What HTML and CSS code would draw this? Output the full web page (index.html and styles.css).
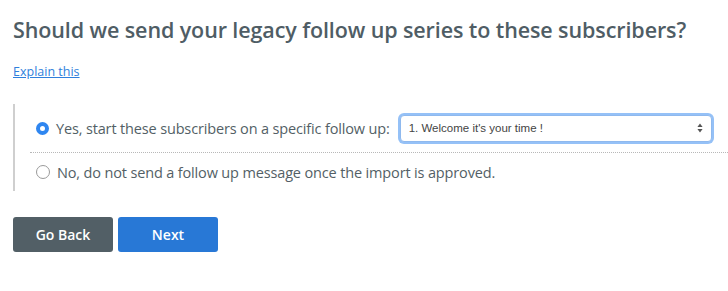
FILE: index.html
```html
<!DOCTYPE html>
<html>
<head>
<meta charset="utf-8">
<link rel="stylesheet" href="styles.css">
</head>
<body>
<div class="page">
  <h1 class="title">Should we send your legacy follow up series to these subscribers?</h1>
  <a class="explain" href="#">Explain this</a>
  <div class="options">
    <div class="option option-first">
      <span class="radio radio-on"></span>
      <span class="label">Yes, start these subscribers on a specific follow up:</span>
      <div class="select">
        <span class="select-text">1. Welcome it's your time !</span>
        <svg class="arrows" width="6" height="10" viewBox="0 0 6 10"><path d="M3 0.5 L5.6 4 H0.4 Z M3 9.5 L5.6 6 H0.4 Z" fill="#555"/></svg>
      </div>
    </div>
    <div class="option">
      <span class="radio"></span>
      <span class="label">No, do not send a follow up message once the import is approved.</span>
    </div>
  </div>
  <div class="buttons">
    <button class="btn btn-back">Go Back</button>
    <button class="btn btn-next">Next</button>
  </div>
</div>
</body>
</html>
```

FILE: styles.css
```css
html, body {
  margin: 0;
  padding: 0;
  background: #fff;
}
.page {
  padding: 13px 0 0 13px;
  font-family: "Open Sans", "Noto Sans", sans-serif;
  color: #515f67;
}
.title {
  margin: 0;
  font-size: 21.5px;
  font-weight: 600;
  line-height: 34px;
  color: #4f5d65;
  letter-spacing: -0.1px;
  white-space: nowrap;
}
.explain {
  display: inline-block;
  margin-top: 16px;
  font-size: 12.5px;
  line-height: 18px;
  color: #2f7fdc;
  text-decoration: underline;
}
.options {
  margin-top: 23px;
  border-left: 2px solid #cfcfcf;
  padding: 0 0 0 15px;
}
.option {
  display: flex;
  align-items: center;
  padding-left: 6px;
  font-size: 14.5px;
  color: #535f66;
}
.option-first {
  height: 48px;
  border-bottom: 1px dotted #b8b8b8;
}
.option:last-child {
  height: 38px;
}
.radio {
  width: 12px;
  height: 12px;
  border: 1px solid #9a9a9a;
  border-radius: 50%;
  box-sizing: content-box;
  flex: none;
  margin-right: 7px;
  background: #fff;
}
.radio-on {
  width: 5px;
  height: 5px;
  border: 4px solid #2f86f0;
  background: #fff;
}
.label {
  white-space: nowrap;
  letter-spacing: -0.15px;
}
.select {
  margin-left: 10px;
  width: 312px;
  height: 27px;
  border: 1px solid #8fb9ee;
  border-radius: 4px;
  box-shadow: 0 0 0 2px #95c1f7;
  display: flex;
  align-items: center;
  justify-content: space-between;
  padding: 0 8px 0 8px;
  box-sizing: border-box;
  background: #fff;
}
.select-text {
  font-family: "Liberation Sans", Arial, sans-serif;
  font-size: 11.5px;
  color: #444;
}
.arrows {
  display: block;
}
.buttons {
  display: flex;
  gap: 5px;
  margin-top: 26px;
}
.btn {
  width: 100px;
  height: 35px;
  border: none;
  border-radius: 3px;
  font-family: "Open Sans", "Noto Sans", sans-serif;
  font-size: 14px;
  font-weight: 600;
  color: #fff;
  cursor: pointer;
  padding: 0;
}
.btn-back {
  background: #525f66;
}
.btn-next {
  background: #2878d6;
}
```
